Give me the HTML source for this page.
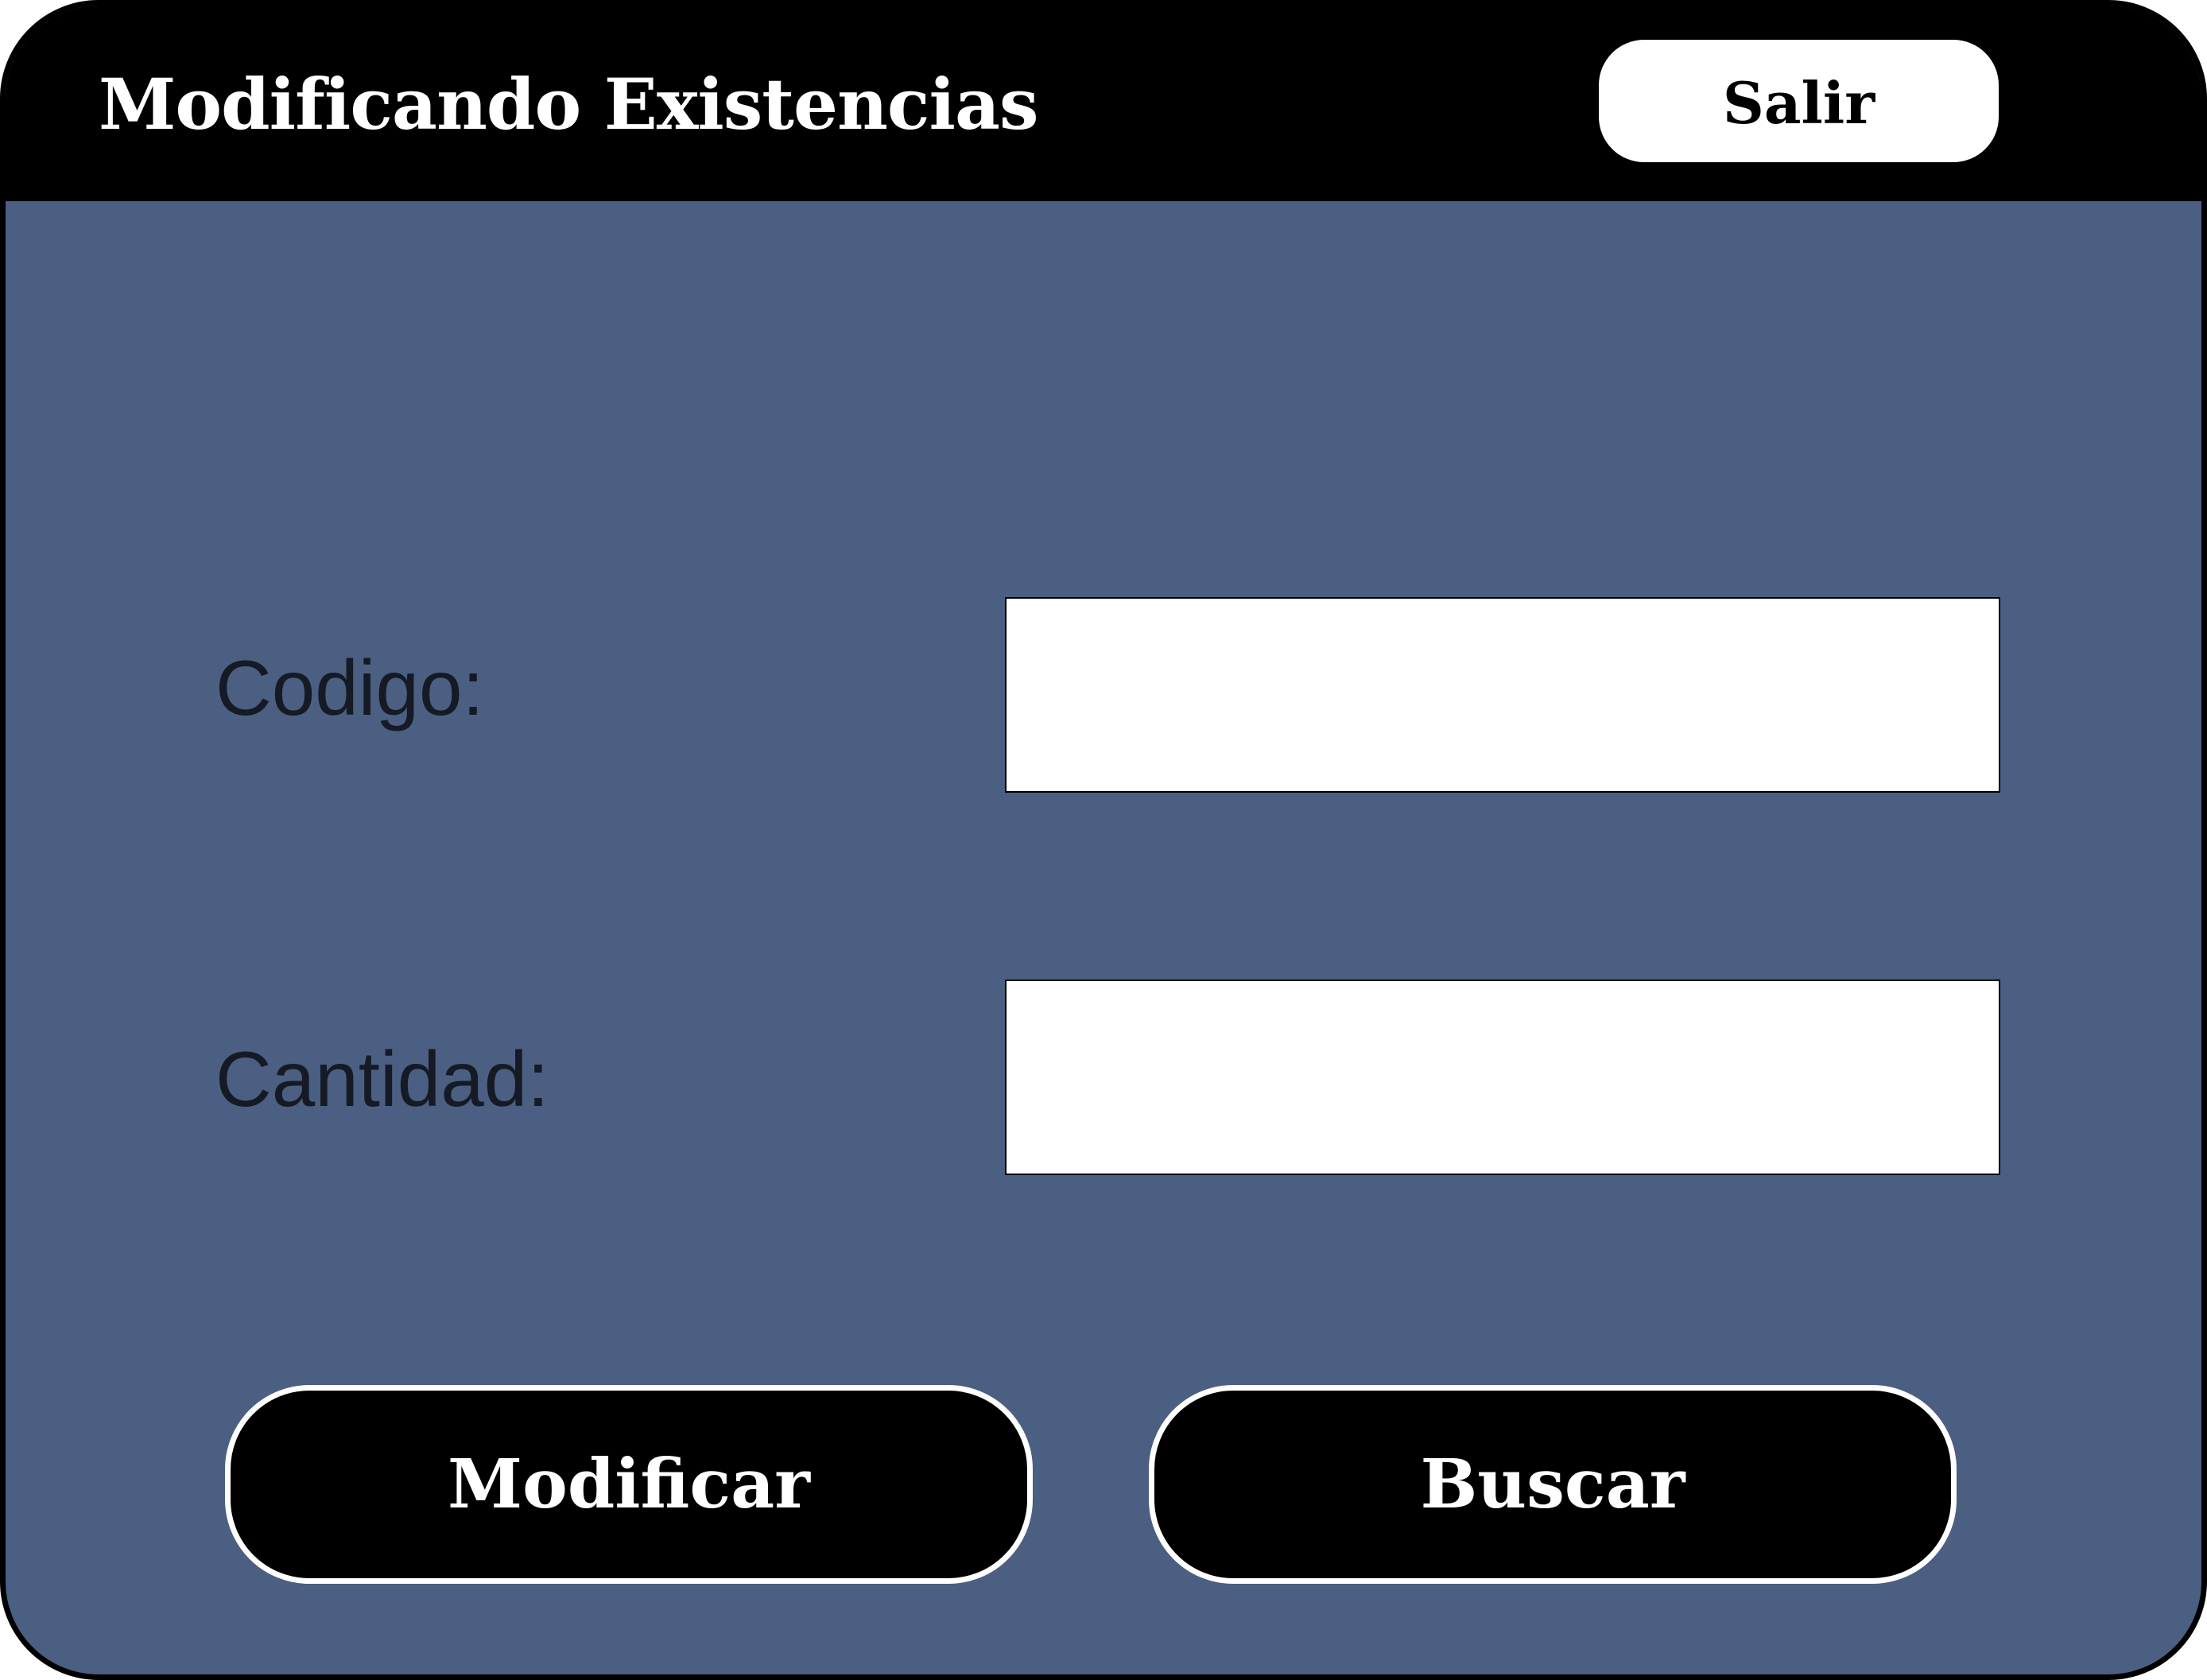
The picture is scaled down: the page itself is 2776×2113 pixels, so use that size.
<!DOCTYPE html>
<html><head><meta charset="utf-8"><style>
html,body{margin:0;padding:0;background:#fff;}
body{width:2776px;height:2113px;position:relative;overflow:hidden;font-family:"DejaVu Serif","Liberation Serif",serif;}
.win{position:absolute;left:0;top:0;width:2762px;height:2099px;border:7px solid #000;border-radius:124px;background:#4b5f82;overflow:hidden;}
.hdr{position:absolute;left:0;top:0;right:0;height:246px;background:#000;}
.title{position:absolute;left:117px;top:72px;font-size:88px;font-weight:bold;color:#fff;letter-spacing:-1px;white-space:nowrap;}
.salir{position:absolute;left:2004px;top:43px;width:503px;height:154px;background:#fff;border-radius:57px;color:#000;font-weight:bold;font-size:72px;text-align:center;line-height:160px;}
.lbl{position:absolute;font-family:"Liberation Sans",sans-serif;font-weight:300;color:#151a25;font-size:98px;}
.inp{position:absolute;left:1257px;width:1248px;height:242px;background:#fff;border:2px solid #000;}
.btn{position:absolute;top:1735px;width:1002px;height:236px;background:#000;border:7px solid #fff;border-radius:106px;color:#fff;font-weight:bold;font-size:85px;text-align:center;line-height:236px;}
</style></head><body>
<div class="win">
<div class="hdr"></div>
<div class="title">Modificando Existencias</div>
<div class="salir">Salir</div>
<div class="lbl" style="left:264px;top:802px;">Codigo:</div>
<div class="lbl" style="left:264px;top:1294px;">Cantidad:</div>
<div class="inp" style="top:744px;"></div>
<div class="inp" style="top:1225px;"></div>
<div class="btn" style="left:276px;">Modificar</div>
<div class="btn" style="left:1438px;">Buscar</div>
</div>
</body></html>
